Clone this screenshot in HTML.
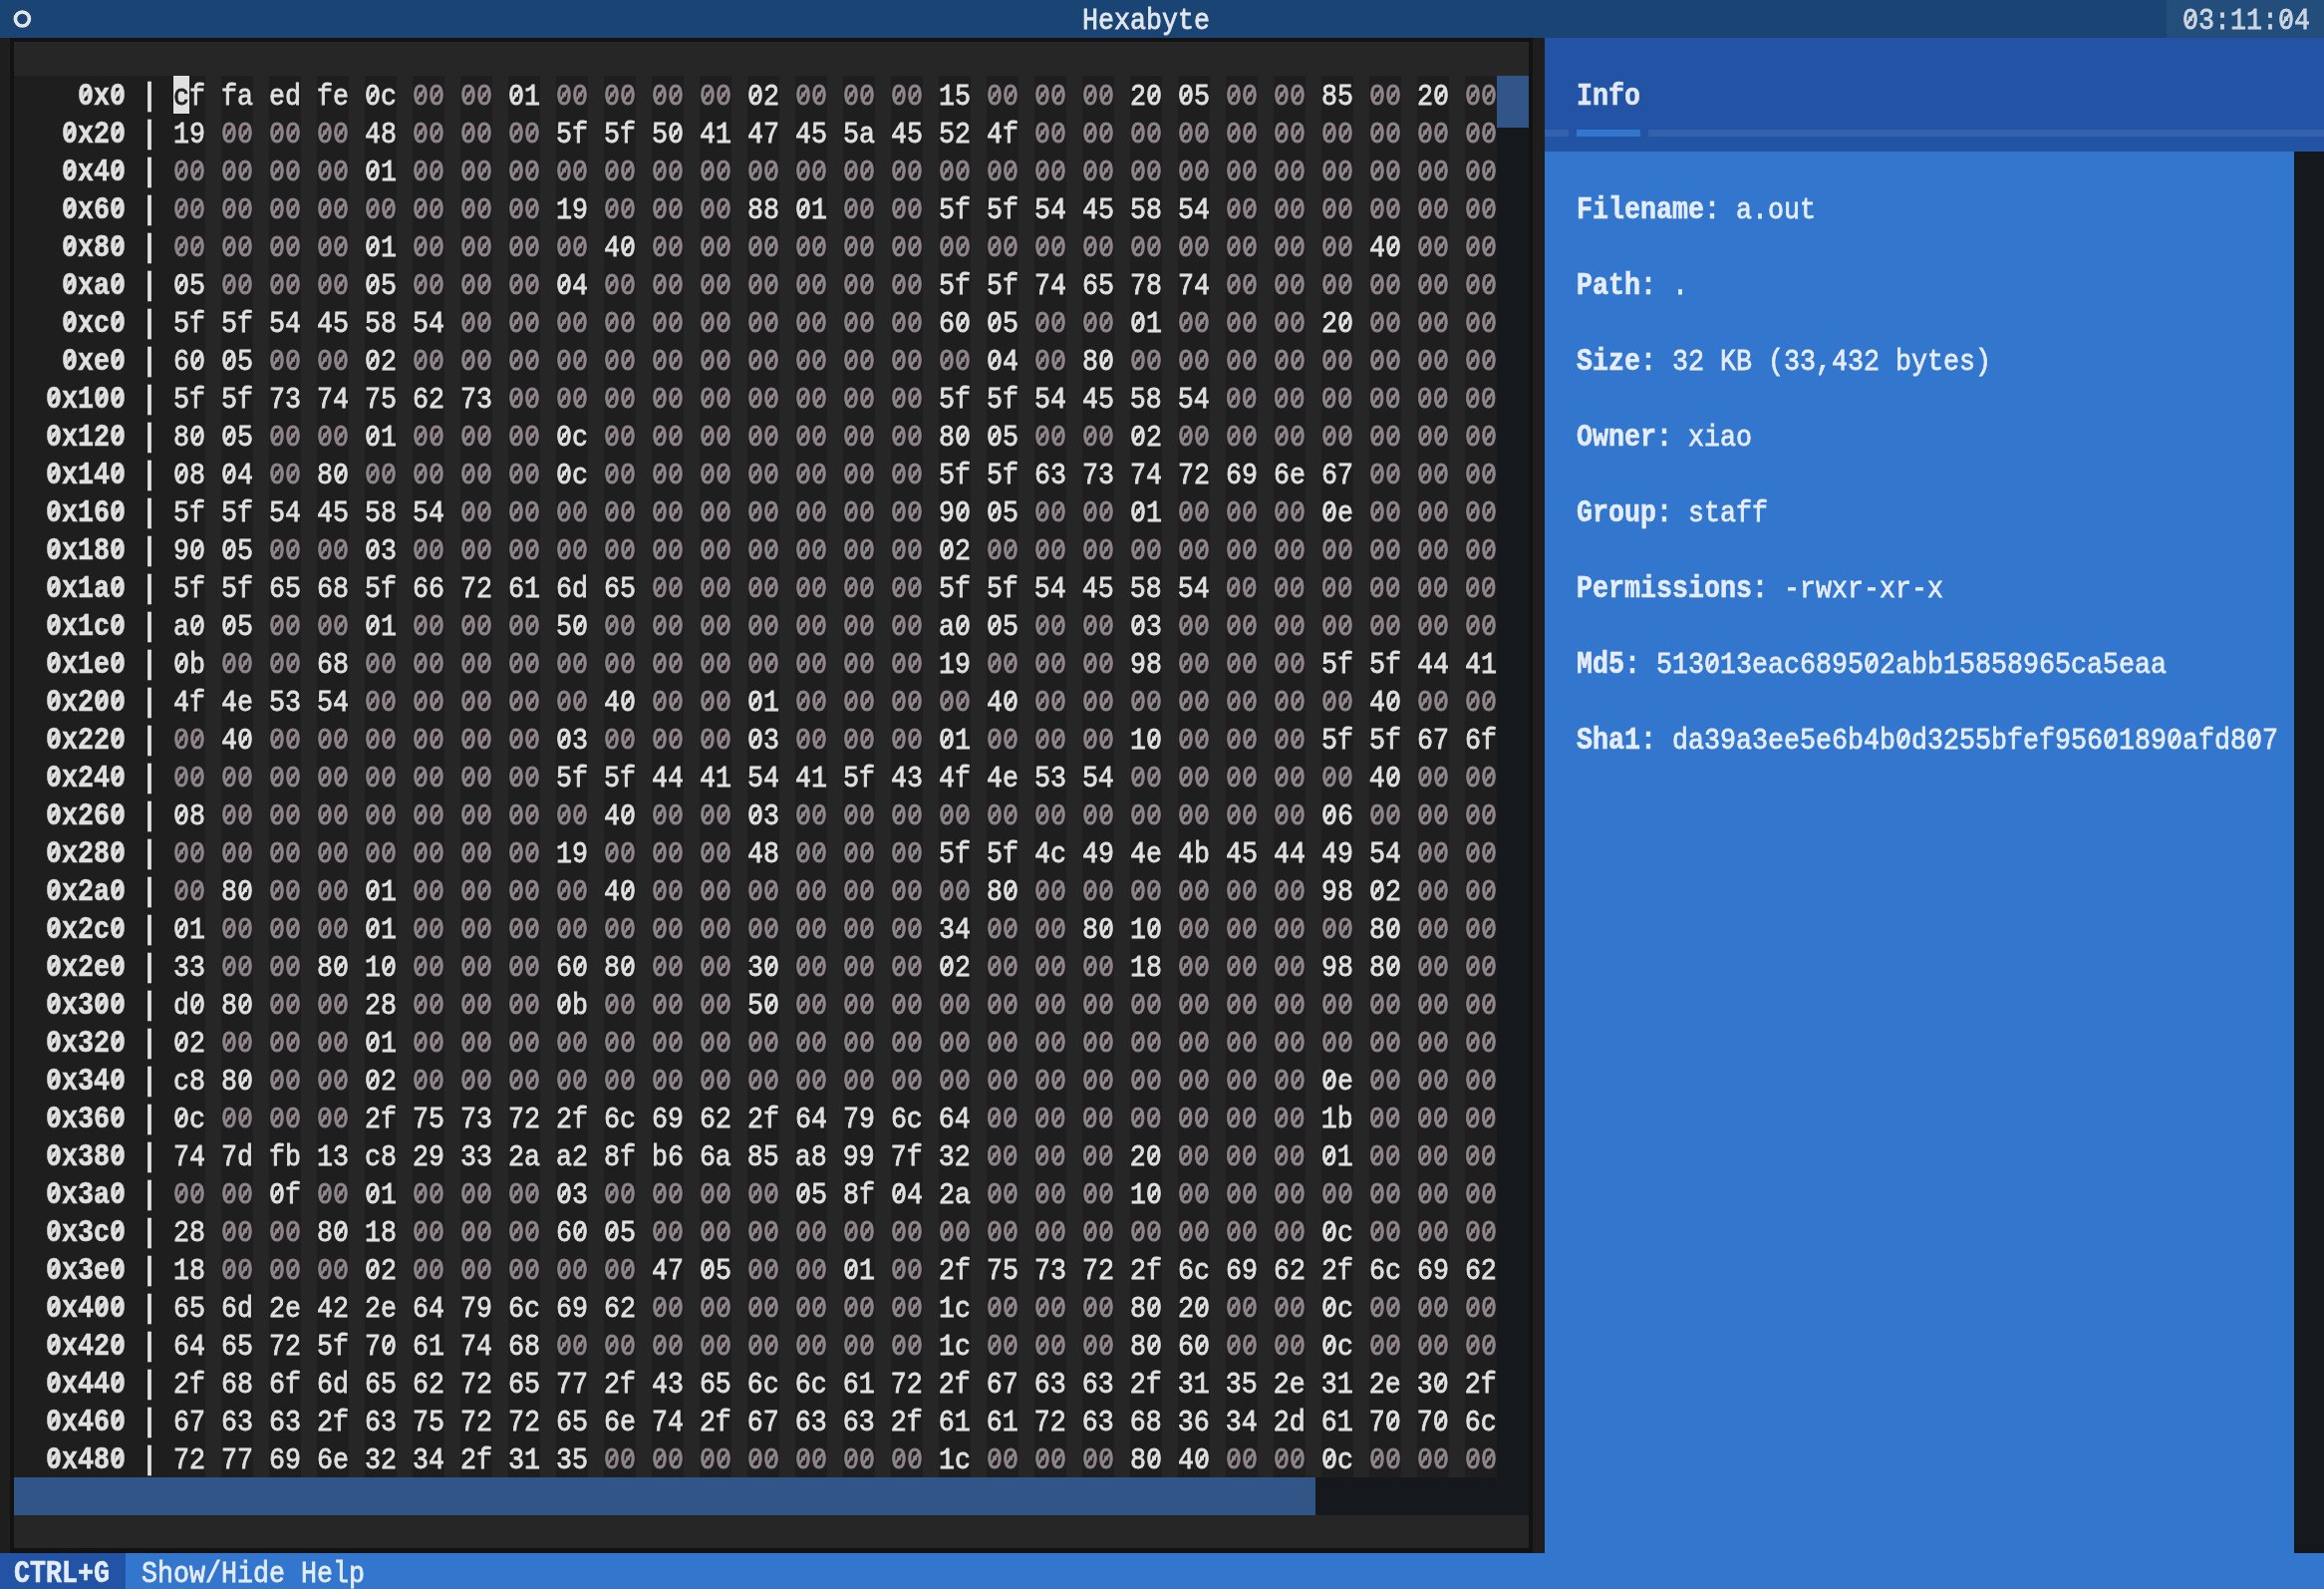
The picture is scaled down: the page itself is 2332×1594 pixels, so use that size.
<!DOCTYPE html>
<html lang="en"><head><meta charset="utf-8"><title>Hexabyte</title>
<style>
html,body{margin:0;padding:0}
body{width:2332px;height:1594px;overflow:hidden;background:#1e1e1e;position:relative}
#t{will-change:transform;position:absolute;left:0;top:0;width:2332px;height:1594px;overflow:hidden;font-family:"Liberation Mono",monospace;font-size:26.6623px;line-height:38px;color:#e0e0e0}
.x{position:absolute}
.r{position:absolute;height:38px;white-space:pre;margin:0;transform-origin:0 0;transform:translateY(0.333px) scaleY(1.09);-webkit-text-stroke:0.7px}
b{font-weight:bold;-webkit-text-stroke:0.5px;display:inline-block;transform-origin:0 26.116px;transform:translateY(0.0px) scaleY(1.07)}
i{font-style:normal;color:#8f858b}
#t{--bg:#1e1e1e}
u{text-decoration:none;background:linear-gradient(90deg,var(--bg) 0,var(--bg) 3.6px,transparent 3.6px,transparent 12.4px,var(--bg) 12.4px,var(--bg) 16px) 0 0/16px 26.3px repeat-x,linear-gradient(127.3deg,transparent calc(50% - 1.7px),currentColor calc(50% - 0.8px),currentColor calc(50% + 0.8px),transparent calc(50% + 1.7px)) 0 0/16px 26.3px repeat-x}
.inf{--bg:#3376cd}
.hx{left:14px;color:#e0e0e0}
.inf{left:1582px;color:#e5edf8}

</style></head><body><div id="t">
<div class="x" style="left:0;top:0;width:2332px;height:38px;background:#1a4474"></div>
<div class="x" style="left:2174px;top:0;width:160px;height:38px;background:#234d7a"></div>
<svg class="x" style="left:12px;top:0" width="22" height="38" viewBox="0 0 22 38"><circle cx="10.4" cy="19" r="7" fill="none" stroke="#e1e6ee" stroke-width="3.65"/></svg>
<div class="r" style="left:1086px;top:0;color:#e1e7ed">Hexabyte</div>
<div class="r" style="left:2190px;top:0;color:#ccd5e1;--bg:#234d7a"><u>0</u>3:11:<u>0</u>4</div>
<div class="x" style="left:10px;top:38px;width:1528px;height:1520px;background:#121212"></div>
<div class="x" style="left:14px;top:42px;width:1520px;height:1511px;background:#262626"></div>
<div class="x" style="left:1502px;top:76px;width:32px;height:1444px;background:#15191e"></div>
<div class="x" style="left:1502px;top:76px;width:32px;height:52px;background:#315587"></div>
<div class="x" style="left:14px;top:1482px;width:1488px;height:38px;background:#15191e"></div>
<div class="x" style="left:14px;top:1482px;width:1306px;height:38px;background:#315587"></div>
<div class="x" style="left:14px;top:76px;width:160px;height:1406px;background:#1e1e1e"></div>
<div class="x" style="left:174px;top:76px;width:1328px;height:1406px;background:repeating-linear-gradient(90deg,#1e1e1e 0,#1e1e1e 32px,#262626 32px,#262626 48px)"></div>
<div class="x" style="left:174px;top:76px;width:16px;height:38px;background:#e0e0e0"></div>
<div class="r hx" style="top:76px"><b>    <u>0</u>x<u>0</u> |</b> <span style="color:#1e1e1e">c</span>f fa ed fe <u>0</u>c <i><u>0</u><u>0</u> <u>0</u><u>0</u></i> <u>0</u>1 <i><u>0</u><u>0</u> <u>0</u><u>0</u> <u>0</u><u>0</u> <u>0</u><u>0</u></i> <u>0</u>2 <i><u>0</u><u>0</u> <u>0</u><u>0</u> <u>0</u><u>0</u></i> 15 <i><u>0</u><u>0</u> <u>0</u><u>0</u> <u>0</u><u>0</u></i> 2<u>0</u> <u>0</u>5 <i><u>0</u><u>0</u> <u>0</u><u>0</u></i> 85 <i><u>0</u><u>0</u></i> 2<u>0</u> <i><u>0</u><u>0</u></i></div>
<div class="r hx" style="top:114px"><b>   <u>0</u>x2<u>0</u> |</b> 19 <i><u>0</u><u>0</u> <u>0</u><u>0</u> <u>0</u><u>0</u></i> 48 <i><u>0</u><u>0</u> <u>0</u><u>0</u> <u>0</u><u>0</u></i> 5f 5f 5<u>0</u> 41 47 45 5a 45 52 4f <i><u>0</u><u>0</u> <u>0</u><u>0</u> <u>0</u><u>0</u> <u>0</u><u>0</u> <u>0</u><u>0</u> <u>0</u><u>0</u> <u>0</u><u>0</u> <u>0</u><u>0</u> <u>0</u><u>0</u> <u>0</u><u>0</u></i></div>
<div class="r hx" style="top:152px"><b>   <u>0</u>x4<u>0</u> |</b> <i><u>0</u><u>0</u> <u>0</u><u>0</u> <u>0</u><u>0</u> <u>0</u><u>0</u></i> <u>0</u>1 <i><u>0</u><u>0</u> <u>0</u><u>0</u> <u>0</u><u>0</u> <u>0</u><u>0</u> <u>0</u><u>0</u> <u>0</u><u>0</u> <u>0</u><u>0</u> <u>0</u><u>0</u> <u>0</u><u>0</u> <u>0</u><u>0</u> <u>0</u><u>0</u> <u>0</u><u>0</u> <u>0</u><u>0</u> <u>0</u><u>0</u> <u>0</u><u>0</u> <u>0</u><u>0</u> <u>0</u><u>0</u> <u>0</u><u>0</u> <u>0</u><u>0</u> <u>0</u><u>0</u> <u>0</u><u>0</u> <u>0</u><u>0</u> <u>0</u><u>0</u></i></div>
<div class="r hx" style="top:190px"><b>   <u>0</u>x6<u>0</u> |</b> <i><u>0</u><u>0</u> <u>0</u><u>0</u> <u>0</u><u>0</u> <u>0</u><u>0</u> <u>0</u><u>0</u> <u>0</u><u>0</u> <u>0</u><u>0</u> <u>0</u><u>0</u></i> 19 <i><u>0</u><u>0</u> <u>0</u><u>0</u> <u>0</u><u>0</u></i> 88 <u>0</u>1 <i><u>0</u><u>0</u> <u>0</u><u>0</u></i> 5f 5f 54 45 58 54 <i><u>0</u><u>0</u> <u>0</u><u>0</u> <u>0</u><u>0</u> <u>0</u><u>0</u> <u>0</u><u>0</u> <u>0</u><u>0</u></i></div>
<div class="r hx" style="top:228px"><b>   <u>0</u>x8<u>0</u> |</b> <i><u>0</u><u>0</u> <u>0</u><u>0</u> <u>0</u><u>0</u> <u>0</u><u>0</u></i> <u>0</u>1 <i><u>0</u><u>0</u> <u>0</u><u>0</u> <u>0</u><u>0</u> <u>0</u><u>0</u></i> 4<u>0</u> <i><u>0</u><u>0</u> <u>0</u><u>0</u> <u>0</u><u>0</u> <u>0</u><u>0</u> <u>0</u><u>0</u> <u>0</u><u>0</u> <u>0</u><u>0</u> <u>0</u><u>0</u> <u>0</u><u>0</u> <u>0</u><u>0</u> <u>0</u><u>0</u> <u>0</u><u>0</u> <u>0</u><u>0</u> <u>0</u><u>0</u> <u>0</u><u>0</u></i> 4<u>0</u> <i><u>0</u><u>0</u> <u>0</u><u>0</u></i></div>
<div class="r hx" style="top:266px"><b>   <u>0</u>xa<u>0</u> |</b> <u>0</u>5 <i><u>0</u><u>0</u> <u>0</u><u>0</u> <u>0</u><u>0</u></i> <u>0</u>5 <i><u>0</u><u>0</u> <u>0</u><u>0</u> <u>0</u><u>0</u></i> <u>0</u>4 <i><u>0</u><u>0</u> <u>0</u><u>0</u> <u>0</u><u>0</u> <u>0</u><u>0</u> <u>0</u><u>0</u> <u>0</u><u>0</u> <u>0</u><u>0</u></i> 5f 5f 74 65 78 74 <i><u>0</u><u>0</u> <u>0</u><u>0</u> <u>0</u><u>0</u> <u>0</u><u>0</u> <u>0</u><u>0</u> <u>0</u><u>0</u></i></div>
<div class="r hx" style="top:304px"><b>   <u>0</u>xc<u>0</u> |</b> 5f 5f 54 45 58 54 <i><u>0</u><u>0</u> <u>0</u><u>0</u> <u>0</u><u>0</u> <u>0</u><u>0</u> <u>0</u><u>0</u> <u>0</u><u>0</u> <u>0</u><u>0</u> <u>0</u><u>0</u> <u>0</u><u>0</u> <u>0</u><u>0</u></i> 6<u>0</u> <u>0</u>5 <i><u>0</u><u>0</u> <u>0</u><u>0</u></i> <u>0</u>1 <i><u>0</u><u>0</u> <u>0</u><u>0</u> <u>0</u><u>0</u></i> 2<u>0</u> <i><u>0</u><u>0</u> <u>0</u><u>0</u> <u>0</u><u>0</u></i></div>
<div class="r hx" style="top:342px"><b>   <u>0</u>xe<u>0</u> |</b> 6<u>0</u> <u>0</u>5 <i><u>0</u><u>0</u> <u>0</u><u>0</u></i> <u>0</u>2 <i><u>0</u><u>0</u> <u>0</u><u>0</u> <u>0</u><u>0</u> <u>0</u><u>0</u> <u>0</u><u>0</u> <u>0</u><u>0</u> <u>0</u><u>0</u> <u>0</u><u>0</u> <u>0</u><u>0</u> <u>0</u><u>0</u> <u>0</u><u>0</u> <u>0</u><u>0</u></i> <u>0</u>4 <i><u>0</u><u>0</u></i> 8<u>0</u> <i><u>0</u><u>0</u> <u>0</u><u>0</u> <u>0</u><u>0</u> <u>0</u><u>0</u> <u>0</u><u>0</u> <u>0</u><u>0</u> <u>0</u><u>0</u> <u>0</u><u>0</u></i></div>
<div class="r hx" style="top:380px"><b>  <u>0</u>x1<u>0</u><u>0</u> |</b> 5f 5f 73 74 75 62 73 <i><u>0</u><u>0</u> <u>0</u><u>0</u> <u>0</u><u>0</u> <u>0</u><u>0</u> <u>0</u><u>0</u> <u>0</u><u>0</u> <u>0</u><u>0</u> <u>0</u><u>0</u> <u>0</u><u>0</u></i> 5f 5f 54 45 58 54 <i><u>0</u><u>0</u> <u>0</u><u>0</u> <u>0</u><u>0</u> <u>0</u><u>0</u> <u>0</u><u>0</u> <u>0</u><u>0</u></i></div>
<div class="r hx" style="top:418px"><b>  <u>0</u>x12<u>0</u> |</b> 8<u>0</u> <u>0</u>5 <i><u>0</u><u>0</u> <u>0</u><u>0</u></i> <u>0</u>1 <i><u>0</u><u>0</u> <u>0</u><u>0</u> <u>0</u><u>0</u></i> <u>0</u>c <i><u>0</u><u>0</u> <u>0</u><u>0</u> <u>0</u><u>0</u> <u>0</u><u>0</u> <u>0</u><u>0</u> <u>0</u><u>0</u> <u>0</u><u>0</u></i> 8<u>0</u> <u>0</u>5 <i><u>0</u><u>0</u> <u>0</u><u>0</u></i> <u>0</u>2 <i><u>0</u><u>0</u> <u>0</u><u>0</u> <u>0</u><u>0</u> <u>0</u><u>0</u> <u>0</u><u>0</u> <u>0</u><u>0</u> <u>0</u><u>0</u></i></div>
<div class="r hx" style="top:456px"><b>  <u>0</u>x14<u>0</u> |</b> <u>0</u>8 <u>0</u>4 <i><u>0</u><u>0</u></i> 8<u>0</u> <i><u>0</u><u>0</u> <u>0</u><u>0</u> <u>0</u><u>0</u> <u>0</u><u>0</u></i> <u>0</u>c <i><u>0</u><u>0</u> <u>0</u><u>0</u> <u>0</u><u>0</u> <u>0</u><u>0</u> <u>0</u><u>0</u> <u>0</u><u>0</u> <u>0</u><u>0</u></i> 5f 5f 63 73 74 72 69 6e 67 <i><u>0</u><u>0</u> <u>0</u><u>0</u> <u>0</u><u>0</u></i></div>
<div class="r hx" style="top:494px"><b>  <u>0</u>x16<u>0</u> |</b> 5f 5f 54 45 58 54 <i><u>0</u><u>0</u> <u>0</u><u>0</u> <u>0</u><u>0</u> <u>0</u><u>0</u> <u>0</u><u>0</u> <u>0</u><u>0</u> <u>0</u><u>0</u> <u>0</u><u>0</u> <u>0</u><u>0</u> <u>0</u><u>0</u></i> 9<u>0</u> <u>0</u>5 <i><u>0</u><u>0</u> <u>0</u><u>0</u></i> <u>0</u>1 <i><u>0</u><u>0</u> <u>0</u><u>0</u> <u>0</u><u>0</u></i> <u>0</u>e <i><u>0</u><u>0</u> <u>0</u><u>0</u> <u>0</u><u>0</u></i></div>
<div class="r hx" style="top:532px"><b>  <u>0</u>x18<u>0</u> |</b> 9<u>0</u> <u>0</u>5 <i><u>0</u><u>0</u> <u>0</u><u>0</u></i> <u>0</u>3 <i><u>0</u><u>0</u> <u>0</u><u>0</u> <u>0</u><u>0</u> <u>0</u><u>0</u> <u>0</u><u>0</u> <u>0</u><u>0</u> <u>0</u><u>0</u> <u>0</u><u>0</u> <u>0</u><u>0</u> <u>0</u><u>0</u> <u>0</u><u>0</u></i> <u>0</u>2 <i><u>0</u><u>0</u> <u>0</u><u>0</u> <u>0</u><u>0</u> <u>0</u><u>0</u> <u>0</u><u>0</u> <u>0</u><u>0</u> <u>0</u><u>0</u> <u>0</u><u>0</u> <u>0</u><u>0</u> <u>0</u><u>0</u> <u>0</u><u>0</u></i></div>
<div class="r hx" style="top:570px"><b>  <u>0</u>x1a<u>0</u> |</b> 5f 5f 65 68 5f 66 72 61 6d 65 <i><u>0</u><u>0</u> <u>0</u><u>0</u> <u>0</u><u>0</u> <u>0</u><u>0</u> <u>0</u><u>0</u> <u>0</u><u>0</u></i> 5f 5f 54 45 58 54 <i><u>0</u><u>0</u> <u>0</u><u>0</u> <u>0</u><u>0</u> <u>0</u><u>0</u> <u>0</u><u>0</u> <u>0</u><u>0</u></i></div>
<div class="r hx" style="top:608px"><b>  <u>0</u>x1c<u>0</u> |</b> a<u>0</u> <u>0</u>5 <i><u>0</u><u>0</u> <u>0</u><u>0</u></i> <u>0</u>1 <i><u>0</u><u>0</u> <u>0</u><u>0</u> <u>0</u><u>0</u></i> 5<u>0</u> <i><u>0</u><u>0</u> <u>0</u><u>0</u> <u>0</u><u>0</u> <u>0</u><u>0</u> <u>0</u><u>0</u> <u>0</u><u>0</u> <u>0</u><u>0</u></i> a<u>0</u> <u>0</u>5 <i><u>0</u><u>0</u> <u>0</u><u>0</u></i> <u>0</u>3 <i><u>0</u><u>0</u> <u>0</u><u>0</u> <u>0</u><u>0</u> <u>0</u><u>0</u> <u>0</u><u>0</u> <u>0</u><u>0</u> <u>0</u><u>0</u></i></div>
<div class="r hx" style="top:646px"><b>  <u>0</u>x1e<u>0</u> |</b> <u>0</u>b <i><u>0</u><u>0</u> <u>0</u><u>0</u></i> 68 <i><u>0</u><u>0</u> <u>0</u><u>0</u> <u>0</u><u>0</u> <u>0</u><u>0</u> <u>0</u><u>0</u> <u>0</u><u>0</u> <u>0</u><u>0</u> <u>0</u><u>0</u> <u>0</u><u>0</u> <u>0</u><u>0</u> <u>0</u><u>0</u> <u>0</u><u>0</u></i> 19 <i><u>0</u><u>0</u> <u>0</u><u>0</u> <u>0</u><u>0</u></i> 98 <i><u>0</u><u>0</u> <u>0</u><u>0</u> <u>0</u><u>0</u></i> 5f 5f 44 41</div>
<div class="r hx" style="top:684px"><b>  <u>0</u>x2<u>0</u><u>0</u> |</b> 4f 4e 53 54 <i><u>0</u><u>0</u> <u>0</u><u>0</u> <u>0</u><u>0</u> <u>0</u><u>0</u> <u>0</u><u>0</u></i> 4<u>0</u> <i><u>0</u><u>0</u> <u>0</u><u>0</u></i> <u>0</u>1 <i><u>0</u><u>0</u> <u>0</u><u>0</u> <u>0</u><u>0</u> <u>0</u><u>0</u></i> 4<u>0</u> <i><u>0</u><u>0</u> <u>0</u><u>0</u> <u>0</u><u>0</u> <u>0</u><u>0</u> <u>0</u><u>0</u> <u>0</u><u>0</u> <u>0</u><u>0</u></i> 4<u>0</u> <i><u>0</u><u>0</u> <u>0</u><u>0</u></i></div>
<div class="r hx" style="top:722px"><b>  <u>0</u>x22<u>0</u> |</b> <i><u>0</u><u>0</u></i> 4<u>0</u> <i><u>0</u><u>0</u> <u>0</u><u>0</u> <u>0</u><u>0</u> <u>0</u><u>0</u> <u>0</u><u>0</u> <u>0</u><u>0</u></i> <u>0</u>3 <i><u>0</u><u>0</u> <u>0</u><u>0</u> <u>0</u><u>0</u></i> <u>0</u>3 <i><u>0</u><u>0</u> <u>0</u><u>0</u> <u>0</u><u>0</u></i> <u>0</u>1 <i><u>0</u><u>0</u> <u>0</u><u>0</u> <u>0</u><u>0</u></i> 1<u>0</u> <i><u>0</u><u>0</u> <u>0</u><u>0</u> <u>0</u><u>0</u></i> 5f 5f 67 6f</div>
<div class="r hx" style="top:760px"><b>  <u>0</u>x24<u>0</u> |</b> <i><u>0</u><u>0</u> <u>0</u><u>0</u> <u>0</u><u>0</u> <u>0</u><u>0</u> <u>0</u><u>0</u> <u>0</u><u>0</u> <u>0</u><u>0</u> <u>0</u><u>0</u></i> 5f 5f 44 41 54 41 5f 43 4f 4e 53 54 <i><u>0</u><u>0</u> <u>0</u><u>0</u> <u>0</u><u>0</u> <u>0</u><u>0</u> <u>0</u><u>0</u></i> 4<u>0</u> <i><u>0</u><u>0</u> <u>0</u><u>0</u></i></div>
<div class="r hx" style="top:798px"><b>  <u>0</u>x26<u>0</u> |</b> <u>0</u>8 <i><u>0</u><u>0</u> <u>0</u><u>0</u> <u>0</u><u>0</u> <u>0</u><u>0</u> <u>0</u><u>0</u> <u>0</u><u>0</u> <u>0</u><u>0</u> <u>0</u><u>0</u></i> 4<u>0</u> <i><u>0</u><u>0</u> <u>0</u><u>0</u></i> <u>0</u>3 <i><u>0</u><u>0</u> <u>0</u><u>0</u> <u>0</u><u>0</u> <u>0</u><u>0</u> <u>0</u><u>0</u> <u>0</u><u>0</u> <u>0</u><u>0</u> <u>0</u><u>0</u> <u>0</u><u>0</u> <u>0</u><u>0</u> <u>0</u><u>0</u></i> <u>0</u>6 <i><u>0</u><u>0</u> <u>0</u><u>0</u> <u>0</u><u>0</u></i></div>
<div class="r hx" style="top:836px"><b>  <u>0</u>x28<u>0</u> |</b> <i><u>0</u><u>0</u> <u>0</u><u>0</u> <u>0</u><u>0</u> <u>0</u><u>0</u> <u>0</u><u>0</u> <u>0</u><u>0</u> <u>0</u><u>0</u> <u>0</u><u>0</u></i> 19 <i><u>0</u><u>0</u> <u>0</u><u>0</u> <u>0</u><u>0</u></i> 48 <i><u>0</u><u>0</u> <u>0</u><u>0</u> <u>0</u><u>0</u></i> 5f 5f 4c 49 4e 4b 45 44 49 54 <i><u>0</u><u>0</u> <u>0</u><u>0</u></i></div>
<div class="r hx" style="top:874px"><b>  <u>0</u>x2a<u>0</u> |</b> <i><u>0</u><u>0</u></i> 8<u>0</u> <i><u>0</u><u>0</u> <u>0</u><u>0</u></i> <u>0</u>1 <i><u>0</u><u>0</u> <u>0</u><u>0</u> <u>0</u><u>0</u> <u>0</u><u>0</u></i> 4<u>0</u> <i><u>0</u><u>0</u> <u>0</u><u>0</u> <u>0</u><u>0</u> <u>0</u><u>0</u> <u>0</u><u>0</u> <u>0</u><u>0</u> <u>0</u><u>0</u></i> 8<u>0</u> <i><u>0</u><u>0</u> <u>0</u><u>0</u> <u>0</u><u>0</u> <u>0</u><u>0</u> <u>0</u><u>0</u> <u>0</u><u>0</u></i> 98 <u>0</u>2 <i><u>0</u><u>0</u> <u>0</u><u>0</u></i></div>
<div class="r hx" style="top:912px"><b>  <u>0</u>x2c<u>0</u> |</b> <u>0</u>1 <i><u>0</u><u>0</u> <u>0</u><u>0</u> <u>0</u><u>0</u></i> <u>0</u>1 <i><u>0</u><u>0</u> <u>0</u><u>0</u> <u>0</u><u>0</u> <u>0</u><u>0</u> <u>0</u><u>0</u> <u>0</u><u>0</u> <u>0</u><u>0</u> <u>0</u><u>0</u> <u>0</u><u>0</u> <u>0</u><u>0</u> <u>0</u><u>0</u></i> 34 <i><u>0</u><u>0</u> <u>0</u><u>0</u></i> 8<u>0</u> 1<u>0</u> <i><u>0</u><u>0</u> <u>0</u><u>0</u> <u>0</u><u>0</u> <u>0</u><u>0</u></i> 8<u>0</u> <i><u>0</u><u>0</u> <u>0</u><u>0</u></i></div>
<div class="r hx" style="top:950px"><b>  <u>0</u>x2e<u>0</u> |</b> 33 <i><u>0</u><u>0</u> <u>0</u><u>0</u></i> 8<u>0</u> 1<u>0</u> <i><u>0</u><u>0</u> <u>0</u><u>0</u> <u>0</u><u>0</u></i> 6<u>0</u> 8<u>0</u> <i><u>0</u><u>0</u> <u>0</u><u>0</u></i> 3<u>0</u> <i><u>0</u><u>0</u> <u>0</u><u>0</u> <u>0</u><u>0</u></i> <u>0</u>2 <i><u>0</u><u>0</u> <u>0</u><u>0</u> <u>0</u><u>0</u></i> 18 <i><u>0</u><u>0</u> <u>0</u><u>0</u> <u>0</u><u>0</u></i> 98 8<u>0</u> <i><u>0</u><u>0</u> <u>0</u><u>0</u></i></div>
<div class="r hx" style="top:988px"><b>  <u>0</u>x3<u>0</u><u>0</u> |</b> d<u>0</u> 8<u>0</u> <i><u>0</u><u>0</u> <u>0</u><u>0</u></i> 28 <i><u>0</u><u>0</u> <u>0</u><u>0</u> <u>0</u><u>0</u></i> <u>0</u>b <i><u>0</u><u>0</u> <u>0</u><u>0</u> <u>0</u><u>0</u></i> 5<u>0</u> <i><u>0</u><u>0</u> <u>0</u><u>0</u> <u>0</u><u>0</u> <u>0</u><u>0</u> <u>0</u><u>0</u> <u>0</u><u>0</u> <u>0</u><u>0</u> <u>0</u><u>0</u> <u>0</u><u>0</u> <u>0</u><u>0</u> <u>0</u><u>0</u> <u>0</u><u>0</u> <u>0</u><u>0</u> <u>0</u><u>0</u> <u>0</u><u>0</u></i></div>
<div class="r hx" style="top:1026px"><b>  <u>0</u>x32<u>0</u> |</b> <u>0</u>2 <i><u>0</u><u>0</u> <u>0</u><u>0</u> <u>0</u><u>0</u></i> <u>0</u>1 <i><u>0</u><u>0</u> <u>0</u><u>0</u> <u>0</u><u>0</u> <u>0</u><u>0</u> <u>0</u><u>0</u> <u>0</u><u>0</u> <u>0</u><u>0</u> <u>0</u><u>0</u> <u>0</u><u>0</u> <u>0</u><u>0</u> <u>0</u><u>0</u> <u>0</u><u>0</u> <u>0</u><u>0</u> <u>0</u><u>0</u> <u>0</u><u>0</u> <u>0</u><u>0</u> <u>0</u><u>0</u> <u>0</u><u>0</u> <u>0</u><u>0</u> <u>0</u><u>0</u> <u>0</u><u>0</u> <u>0</u><u>0</u> <u>0</u><u>0</u></i></div>
<div class="r hx" style="top:1064px"><b>  <u>0</u>x34<u>0</u> |</b> c8 8<u>0</u> <i><u>0</u><u>0</u> <u>0</u><u>0</u></i> <u>0</u>2 <i><u>0</u><u>0</u> <u>0</u><u>0</u> <u>0</u><u>0</u> <u>0</u><u>0</u> <u>0</u><u>0</u> <u>0</u><u>0</u> <u>0</u><u>0</u> <u>0</u><u>0</u> <u>0</u><u>0</u> <u>0</u><u>0</u> <u>0</u><u>0</u> <u>0</u><u>0</u> <u>0</u><u>0</u> <u>0</u><u>0</u> <u>0</u><u>0</u> <u>0</u><u>0</u> <u>0</u><u>0</u> <u>0</u><u>0</u> <u>0</u><u>0</u></i> <u>0</u>e <i><u>0</u><u>0</u> <u>0</u><u>0</u> <u>0</u><u>0</u></i></div>
<div class="r hx" style="top:1102px"><b>  <u>0</u>x36<u>0</u> |</b> <u>0</u>c <i><u>0</u><u>0</u> <u>0</u><u>0</u> <u>0</u><u>0</u></i> 2f 75 73 72 2f 6c 69 62 2f 64 79 6c 64 <i><u>0</u><u>0</u> <u>0</u><u>0</u> <u>0</u><u>0</u> <u>0</u><u>0</u> <u>0</u><u>0</u> <u>0</u><u>0</u> <u>0</u><u>0</u></i> 1b <i><u>0</u><u>0</u> <u>0</u><u>0</u> <u>0</u><u>0</u></i></div>
<div class="r hx" style="top:1140px"><b>  <u>0</u>x38<u>0</u> |</b> 74 7d fb 13 c8 29 33 2a a2 8f b6 6a 85 a8 99 7f 32 <i><u>0</u><u>0</u> <u>0</u><u>0</u> <u>0</u><u>0</u></i> 2<u>0</u> <i><u>0</u><u>0</u> <u>0</u><u>0</u> <u>0</u><u>0</u></i> <u>0</u>1 <i><u>0</u><u>0</u> <u>0</u><u>0</u> <u>0</u><u>0</u></i></div>
<div class="r hx" style="top:1178px"><b>  <u>0</u>x3a<u>0</u> |</b> <i><u>0</u><u>0</u> <u>0</u><u>0</u></i> <u>0</u>f <i><u>0</u><u>0</u></i> <u>0</u>1 <i><u>0</u><u>0</u> <u>0</u><u>0</u> <u>0</u><u>0</u></i> <u>0</u>3 <i><u>0</u><u>0</u> <u>0</u><u>0</u> <u>0</u><u>0</u> <u>0</u><u>0</u></i> <u>0</u>5 8f <u>0</u>4 2a <i><u>0</u><u>0</u> <u>0</u><u>0</u> <u>0</u><u>0</u></i> 1<u>0</u> <i><u>0</u><u>0</u> <u>0</u><u>0</u> <u>0</u><u>0</u> <u>0</u><u>0</u> <u>0</u><u>0</u> <u>0</u><u>0</u> <u>0</u><u>0</u></i></div>
<div class="r hx" style="top:1216px"><b>  <u>0</u>x3c<u>0</u> |</b> 28 <i><u>0</u><u>0</u> <u>0</u><u>0</u></i> 8<u>0</u> 18 <i><u>0</u><u>0</u> <u>0</u><u>0</u> <u>0</u><u>0</u></i> 6<u>0</u> <u>0</u>5 <i><u>0</u><u>0</u> <u>0</u><u>0</u> <u>0</u><u>0</u> <u>0</u><u>0</u> <u>0</u><u>0</u> <u>0</u><u>0</u> <u>0</u><u>0</u> <u>0</u><u>0</u> <u>0</u><u>0</u> <u>0</u><u>0</u> <u>0</u><u>0</u> <u>0</u><u>0</u> <u>0</u><u>0</u> <u>0</u><u>0</u></i> <u>0</u>c <i><u>0</u><u>0</u> <u>0</u><u>0</u> <u>0</u><u>0</u></i></div>
<div class="r hx" style="top:1254px"><b>  <u>0</u>x3e<u>0</u> |</b> 18 <i><u>0</u><u>0</u> <u>0</u><u>0</u> <u>0</u><u>0</u></i> <u>0</u>2 <i><u>0</u><u>0</u> <u>0</u><u>0</u> <u>0</u><u>0</u> <u>0</u><u>0</u> <u>0</u><u>0</u></i> 47 <u>0</u>5 <i><u>0</u><u>0</u> <u>0</u><u>0</u></i> <u>0</u>1 <i><u>0</u><u>0</u></i> 2f 75 73 72 2f 6c 69 62 2f 6c 69 62</div>
<div class="r hx" style="top:1292px"><b>  <u>0</u>x4<u>0</u><u>0</u> |</b> 65 6d 2e 42 2e 64 79 6c 69 62 <i><u>0</u><u>0</u> <u>0</u><u>0</u> <u>0</u><u>0</u> <u>0</u><u>0</u> <u>0</u><u>0</u> <u>0</u><u>0</u></i> 1c <i><u>0</u><u>0</u> <u>0</u><u>0</u> <u>0</u><u>0</u></i> 8<u>0</u> 2<u>0</u> <i><u>0</u><u>0</u> <u>0</u><u>0</u></i> <u>0</u>c <i><u>0</u><u>0</u> <u>0</u><u>0</u> <u>0</u><u>0</u></i></div>
<div class="r hx" style="top:1330px"><b>  <u>0</u>x42<u>0</u> |</b> 64 65 72 5f 7<u>0</u> 61 74 68 <i><u>0</u><u>0</u> <u>0</u><u>0</u> <u>0</u><u>0</u> <u>0</u><u>0</u> <u>0</u><u>0</u> <u>0</u><u>0</u> <u>0</u><u>0</u> <u>0</u><u>0</u></i> 1c <i><u>0</u><u>0</u> <u>0</u><u>0</u> <u>0</u><u>0</u></i> 8<u>0</u> 6<u>0</u> <i><u>0</u><u>0</u> <u>0</u><u>0</u></i> <u>0</u>c <i><u>0</u><u>0</u> <u>0</u><u>0</u> <u>0</u><u>0</u></i></div>
<div class="r hx" style="top:1368px"><b>  <u>0</u>x44<u>0</u> |</b> 2f 68 6f 6d 65 62 72 65 77 2f 43 65 6c 6c 61 72 2f 67 63 63 2f 31 35 2e 31 2e 3<u>0</u> 2f</div>
<div class="r hx" style="top:1406px"><b>  <u>0</u>x46<u>0</u> |</b> 67 63 63 2f 63 75 72 72 65 6e 74 2f 67 63 63 2f 61 61 72 63 68 36 34 2d 61 7<u>0</u> 7<u>0</u> 6c</div>
<div class="r hx" style="top:1444px"><b>  <u>0</u>x48<u>0</u> |</b> 72 77 69 6e 32 34 2f 31 35 <i><u>0</u><u>0</u> <u>0</u><u>0</u> <u>0</u><u>0</u> <u>0</u><u>0</u> <u>0</u><u>0</u> <u>0</u><u>0</u> <u>0</u><u>0</u></i> 1c <i><u>0</u><u>0</u> <u>0</u><u>0</u> <u>0</u><u>0</u></i> 8<u>0</u> 4<u>0</u> <i><u>0</u><u>0</u> <u>0</u><u>0</u></i> <u>0</u>c <i><u>0</u><u>0</u> <u>0</u><u>0</u> <u>0</u><u>0</u></i></div>
<div class="x" style="left:1550px;top:38px;width:782px;height:114px;background:#2253a4"></div>
<div class="x" style="left:1550px;top:152px;width:782px;height:1406px;background:#3376cd"></div>
<div class="x" style="left:2302px;top:152px;width:32px;height:1406px;background:#15191e"></div>
<div class="x" style="left:1550px;top:130px;width:24px;height:7px;background:#3561aa"></div>
<div class="x" style="left:1582px;top:130px;width:64px;height:7px;background:#3376cd"></div>
<div class="x" style="left:1654px;top:130px;width:678px;height:7px;background:#3561aa"></div>
<div class="r" style="left:1582px;top:76px;color:#e2e9f3"><b>Info</b></div>
<div class="r inf" style="top:190px"><b>Filename:</b> a.out</div>
<div class="r inf" style="top:266px"><b>Path:</b> .</div>
<div class="r inf" style="top:342px"><b>Size:</b> 32 KB (33,432 bytes)</div>
<div class="r inf" style="top:418px"><b>Owner:</b> xiao</div>
<div class="r inf" style="top:494px"><b>Group:</b> staff</div>
<div class="r inf" style="top:570px"><b>Permissions:</b> -rwxr-xr-x</div>
<div class="r inf" style="top:646px"><b>Md5:</b> 513<u>0</u>13eac6895<u>0</u>2abb15858965ca5eaa</div>
<div class="r inf" style="top:722px"><b>Sha1:</b> da39a3ee5e6b4b<u>0</u>d3255bfef956<u>0</u>189<u>0</u>afd8<u>0</u>7</div>
<div class="x" style="left:0;top:1558px;width:2332px;height:38px;background:#3376cd"></div>
<div class="x" style="left:0;top:1558px;width:126px;height:38px;background:#2253a4"></div>
<div class="r" style="left:14px;top:1558px;color:#e4ecf7"><b>CTRL+G</b>  Show/Hide Help</div>
</div></body></html>
